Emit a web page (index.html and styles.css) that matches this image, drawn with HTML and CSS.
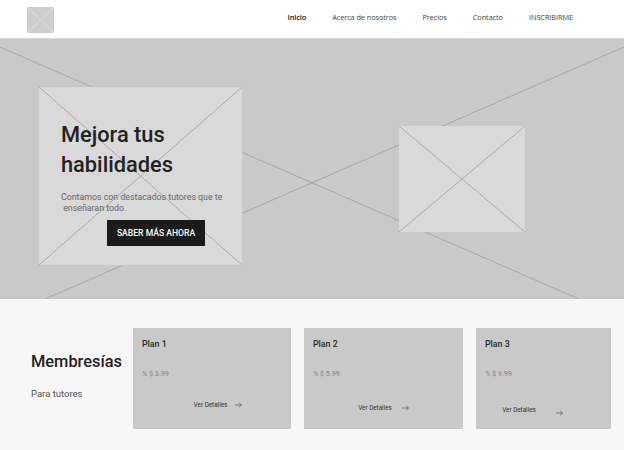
FILE: index.html
```html
<!DOCTYPE html>
<html lang="es">
<head>
<meta charset="utf-8">
<title>Tutores</title>
<link rel="stylesheet" href="styles.css">
</head>
<body>
<header class="header">
  <div class="logo ph">
    <svg class="ph-x" viewBox="0 0 100 100" preserveAspectRatio="none"><line x1="0" y1="0" x2="100" y2="100"/><line x1="100" y1="0" x2="0" y2="100"/></svg>
  </div>
  <nav class="nav">
    <a class="nav-link active" href="#">Inicio</a>
    <a class="nav-link" href="#">Acerca de nosotros</a>
    <a class="nav-link" href="#">Precios</a>
    <a class="nav-link" href="#">Contacto</a>
    <a class="nav-link" href="#">INSCRIBIRME</a>
  </nav>
</header>

<section class="hero">
  <svg class="hero-bg" viewBox="0 0 624 260" preserveAspectRatio="none"><line x1="0" y1="8" x2="579" y2="260"/><line x1="45" y1="260" x2="624" y2="8"/></svg>
  <div class="hero-card ph">
    <svg class="ph-x" viewBox="0 0 100 100" preserveAspectRatio="none"><line x1="0" y1="0" x2="100" y2="100"/><line x1="100" y1="0" x2="0" y2="100"/></svg>
    <div class="hero-content">
      <h1 class="hero-title">Mejora tus habilidades</h1>
      <p class="hero-text">Contamos con destacados tutores que te<br>&nbsp;enseñaran todo.</p>
      <a class="btn" href="#">SABER MÁS AHORA</a>
    </div>
  </div>
  <div class="hero-img ph">
    <svg class="ph-x" viewBox="0 0 100 100" preserveAspectRatio="none"><line x1="0" y1="0" x2="100" y2="100"/><line x1="100" y1="0" x2="0" y2="100"/></svg>
  </div>
</section>

<section class="members">
  <div class="members-intro">
    <h2 class="members-title">Membresías</h2>
    <p class="members-sub">Para tutores</p>
  </div>
  <div class="plans">
    <div class="plan">
      <h3 class="plan-name">Plan 1</h3>
      <p class="plan-price">% $ 3.99</p>
      <a class="plan-link plan-link-first" href="#"><span>Ver Detalles</span><svg class="arrow" viewBox="0 0 8 6"><path d="M0 3H7.3M4.8 0.6L7.3 3L4.8 5.4"/></svg></a>
    </div>
    <div class="plan">
      <h3 class="plan-name">Plan 2</h3>
      <p class="plan-price">% $ 5.99</p>
      <a class="plan-link plan-link-low" href="#"><span>Ver Detalles</span><svg class="arrow" viewBox="0 0 8 6"><path d="M0 3H7.3M4.8 0.6L7.3 3L4.8 5.4"/></svg></a>
    </div>
    <div class="plan">
      <h3 class="plan-name">Plan 3</h3>
      <p class="plan-price">% $ 9.99</p>
      <a class="plan-link plan-link-wide" href="#"><span>Ver Detalles</span><svg class="arrow arrow-low" viewBox="0 0 8 6"><path d="M0 3H7.3M4.8 0.6L7.3 3L4.8 5.4"/></svg></a>
    </div>
  </div>
</section>
</body>
</html>
```

FILE: styles.css
```css
* { box-sizing: border-box; }
html, body { margin: 0; padding: 0; }
body {
  width: 624px;
  height: 450px;
  overflow: hidden;
  background: #f7f7f7;
  font-family: Roboto, "Liberation Sans", sans-serif;
  color: #222;
}

.ph { position: relative; }
.ph-x {
  position: absolute;
  inset: 0;
  width: 100%;
  height: 100%;
}
.ph-x line { stroke: #a9a9a9; stroke-width: 1; vector-effect: non-scaling-stroke; }

/* Header */
.header {
  height: 39px;
  background: #fff;
  border-bottom: 1px solid #d4d4d4;
  display: flex;
  align-items: flex-start;
  padding: 7px 51px 0 27px;
}
.logo {
  width: 27px;
  height: 26px;
  background: #cdcdcd;
}
.logo .ph-x line { stroke: #e2e2e2; }
.nav {
  margin-left: auto;
  display: flex;
  gap: 26px;
  padding-top: 5px;
}
.nav-link {
  font-family: "Open Sans", "Liberation Sans", sans-serif;
  font-size: 7.4px;
  color: #444;
  text-decoration: none;
  letter-spacing: -0.1px;
}
.nav-link.active { color: #111; font-weight: 600; }

/* Hero */
.hero {
  position: relative;
  height: 260px;
  background: #c9c9c9;
  display: flex;
  align-items: flex-start;
  padding: 48px 0 0 39px;
  gap: 157px;
}
.hero-bg {
  position: absolute;
  inset: 0;
  width: 100%;
  height: 100%;
}
.hero-bg line { stroke: #a6a6a6; stroke-width: 1; }
.hero-card {
  width: 203px;
  height: 178px;
  background: #d9d9d9;
}
.hero-content {
  position: relative;
  padding: 33px 0 0 22px;
}
.hero-title {
  margin: 0;
  font-size: 21.8px;
  font-weight: 500;
  line-height: 30px;
  color: #222;
  width: 160px;
}
.hero-text {
  margin: 12px 0 0;
  font-size: 8.8px;
  line-height: 11px;
  color: #666;
}
.btn {
  display: inline-flex;
  align-items: center;
  justify-content: center;
  margin: 6px 0 0 46px;
  width: 98px;
  height: 26px;
  background: #1b1b1b;
  color: #fff;
  font-size: 8.6px;
  font-weight: 500;
  text-decoration: none;
}
.hero-img {
  margin-top: 39px;
  width: 126px;
  height: 106px;
  background: #d9d9d9;
}

/* Memberships */
.members {
  display: flex;
  align-items: flex-start;
  padding: 29px 0 0 31px;
}
.members-intro {
  width: 102px;
  padding-top: 23px;
}
.members-title {
  margin: 0;
  font-size: 16.4px;
  font-weight: 500;
  line-height: 22px;
  color: #222;
}
.members-sub {
  margin: 15px 0 0;
  font-size: 9.5px;
  color: #555;
}
.plans {
  display: grid;
  grid-template-columns: 158px 159px 135px;
  gap: 13px;
}
.plan {
  height: 101px;
  background: #c9c9c9;
  padding: 10px 9px 0;
  display: flex;
  flex-direction: column;
}
.plan-name {
  margin: 0;
  font-size: 8.8px;
  font-weight: 500;
  line-height: 12px;
  color: #2a2a2a;
}
.plan-price {
  margin: 19px 0 0;
  font-size: 7.2px;
  line-height: 10px;
  color: #858585;
}
.plan-link {
  margin-top: 21px;
  align-self: center;
  display: flex;
  align-items: center;
  gap: 8px;
  font-size: 6.3px;
  color: #333;
  text-decoration: none;
  line-height: 10px;
}
.plan-link-first { margin-left: 12px; }
.plan-link-low { margin-top: 24px; gap: 10px; }
.plan-link-wide { margin-top: 26px; gap: 20px; margin-right: 22px; }
.arrow {
  width: 7px;
  height: 6px;
  fill: none;
  stroke: #555;
  stroke-width: 0.8;
}
.arrow-low { position: relative; top: 3px; }
```
